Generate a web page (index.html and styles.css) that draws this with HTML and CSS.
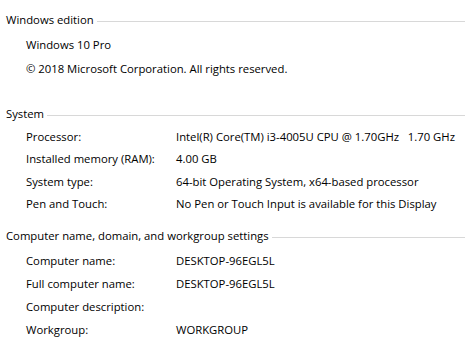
FILE: index.html
```html
<!DOCTYPE html>
<html>
<head>
<meta charset="utf-8">
<link rel="stylesheet" href="styles.css">
</head>
<body>
<div class="page">
  <section class="group g-edition">
    <div class="head"><span class="title">Windows edition</span><span class="rule"></span></div>
    <div class="row"><span class="single">Windows 10 Pro</span></div>
    <div class="row"><span class="single">© 2018 Microsoft Corporation. All rights reserved.</span></div>
  </section>
  <section class="group g-system">
    <div class="head"><span class="title">System</span><span class="rule"></span></div>
    <div class="row"><span class="label">Processor:</span><span class="value">Intel(R) Core(TM) i3-4005U CPU @ 1.70GHz&nbsp;&nbsp;&nbsp;1.70 GHz</span></div>
    <div class="row"><span class="label">Installed memory (RAM):</span><span class="value">4.00 GB</span></div>
    <div class="row"><span class="label">System type:</span><span class="value">64-bit Operating System, x64-based processor</span></div>
    <div class="row"><span class="label">Pen and Touch:</span><span class="value">No Pen or Touch Input is available for this Display</span></div>
  </section>
  <section class="group g-computer">
    <div class="head"><span class="title">Computer name, domain, and workgroup settings</span><span class="rule"></span></div>
    <div class="row"><span class="label">Computer name:</span><span class="value">DESKTOP-96EGL5L</span></div>
    <div class="row"><span class="label">Full computer name:</span><span class="value">DESKTOP-96EGL5L</span></div>
    <div class="row"><span class="label">Computer description:</span><span class="value"></span></div>
    <div class="row"><span class="label">Workgroup:</span><span class="value">WORKGROUP</span></div>
  </section>
</div>
</body>
</html>
```
FILE: styles.css
```css
html, body {
  margin: 0;
  padding: 0;
  background: #ffffff;
}
.page {
  width: 465px;
  height: 340px;
  overflow: hidden;
  font-family: "Open Sans", "Noto Sans", sans-serif;
  font-size: 11.3px;
  color: #000;
  padding-top: 9px;
  box-sizing: border-box;
}
.head {
  display: flex;
  align-items: center;
  height: 20px;
  padding-left: 6px;
  margin-bottom: 2px;
}
.title {
  color: #000;
  padding-right: 3px;
}
.rule {
  flex: 1;
  border-top: 1px solid #d8d8d8;
  margin-top: 4px;
}
.row {
  display: flex;
  align-items: center;
  padding-left: 26px;
  height: 23px;
}
.label {
  width: 150px;
  flex: none;
}
.g-edition .head { margin-bottom: 3px; }
.g-edition .row { height: 24px; }
.g-edition { padding-bottom: 23px; }
.g-system .row { height: 22.5px; }
.g-system { padding-bottom: 10px; }
.g-computer .head { margin-bottom: 4px; }
.g-computer .row { height: 23px; }
```
